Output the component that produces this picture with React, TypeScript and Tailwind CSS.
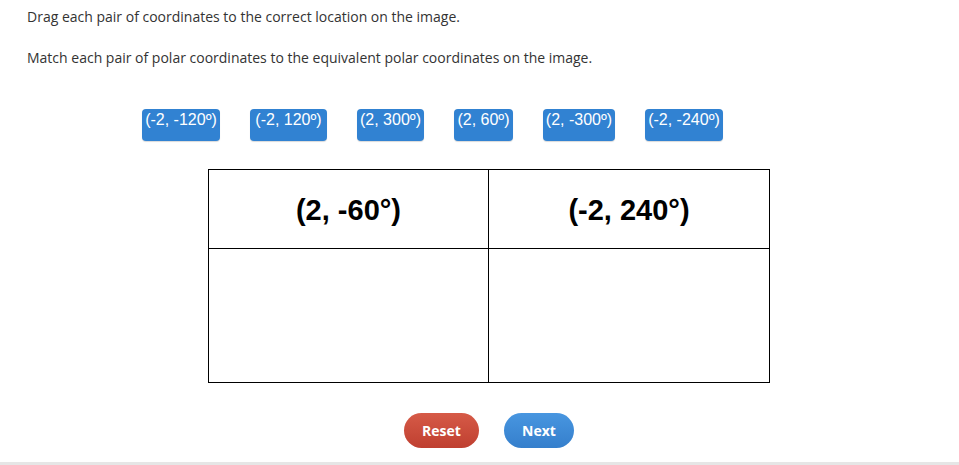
export default function App() {
    const chips = [
        { label: "(-2, -120º)", w: "w-[78px]" },
        { label: "(-2, 120º)", w: "w-[77px]" },
        { label: "(2, 300º)", w: "w-[67px]" },
        { label: "(2, 60º)", w: "w-[59px]" },
        { label: "(2, -300º)", w: "w-[72px]" },
        { label: "(-2, -240º)", w: "w-[78px]" },
    ]

    return (
        <div className="w-[959px] h-[465px] bg-white relative overflow-hidden font-['Open_Sans',sans-serif] text-[#333333]">
            {/* instructions */}
            <div className="pl-[27px] pt-[7px] text-[14px] leading-[20px]">
                <p>Drag each pair of coordinates to the correct location on the image.</p>
                <p className="mt-[21px]">Match each pair of polar coordinates to the equivalent polar coordinates on the image.</p>
            </div>

            {/* draggable chips */}
            <div className="flex gap-[30px] ml-[142px] mt-[41px]">
                {chips.map((c) => (
                    <div
                        key={c.label}
                        className={`${c.w} h-[32px] rounded-[4px] bg-[#3182d2] text-white text-center text-[16px] leading-[20px] pt-[1px] font-['Liberation_Sans',Arial,sans-serif] shadow-[0_1px_1px_rgba(0,0,0,0.15)]`}
                    >
                        {c.label}
                    </div>
                ))}
            </div>

            {/* drop table */}
            <div className="ml-[208px] mt-[28px] w-[562px] border border-black grid grid-cols-2 font-['Liberation_Sans',Arial,sans-serif]">
                <div className="h-[79px] pt-[3px] border-r border-b border-black flex items-center justify-center text-[29px] font-bold text-black">(2, -60°)</div>
                <div className="h-[79px] pt-[3px] border-b border-black flex items-center justify-center text-[29px] font-bold text-black">(-2, 240°)</div>
                <div className="h-[133px] border-r border-black"></div>
                <div className="h-[133px]"></div>
            </div>

            {/* actions */}
            <div className="flex gap-[25px] ml-[404px] mt-[30px]">
                <button className="w-[75px] h-[35px] rounded-full bg-gradient-to-b from-[#d65a47] to-[#bf3f30] text-white text-[14px] font-bold">Reset</button>
                <button className="w-[70px] h-[35px] rounded-full bg-gradient-to-b from-[#4896e0] to-[#357fcc] text-white text-[14px] font-bold">Next</button>
            </div>

            <div className="absolute left-0 right-0 bottom-0 h-[3px] bg-[#e6e6e6]"></div>
        </div>
    )
}
